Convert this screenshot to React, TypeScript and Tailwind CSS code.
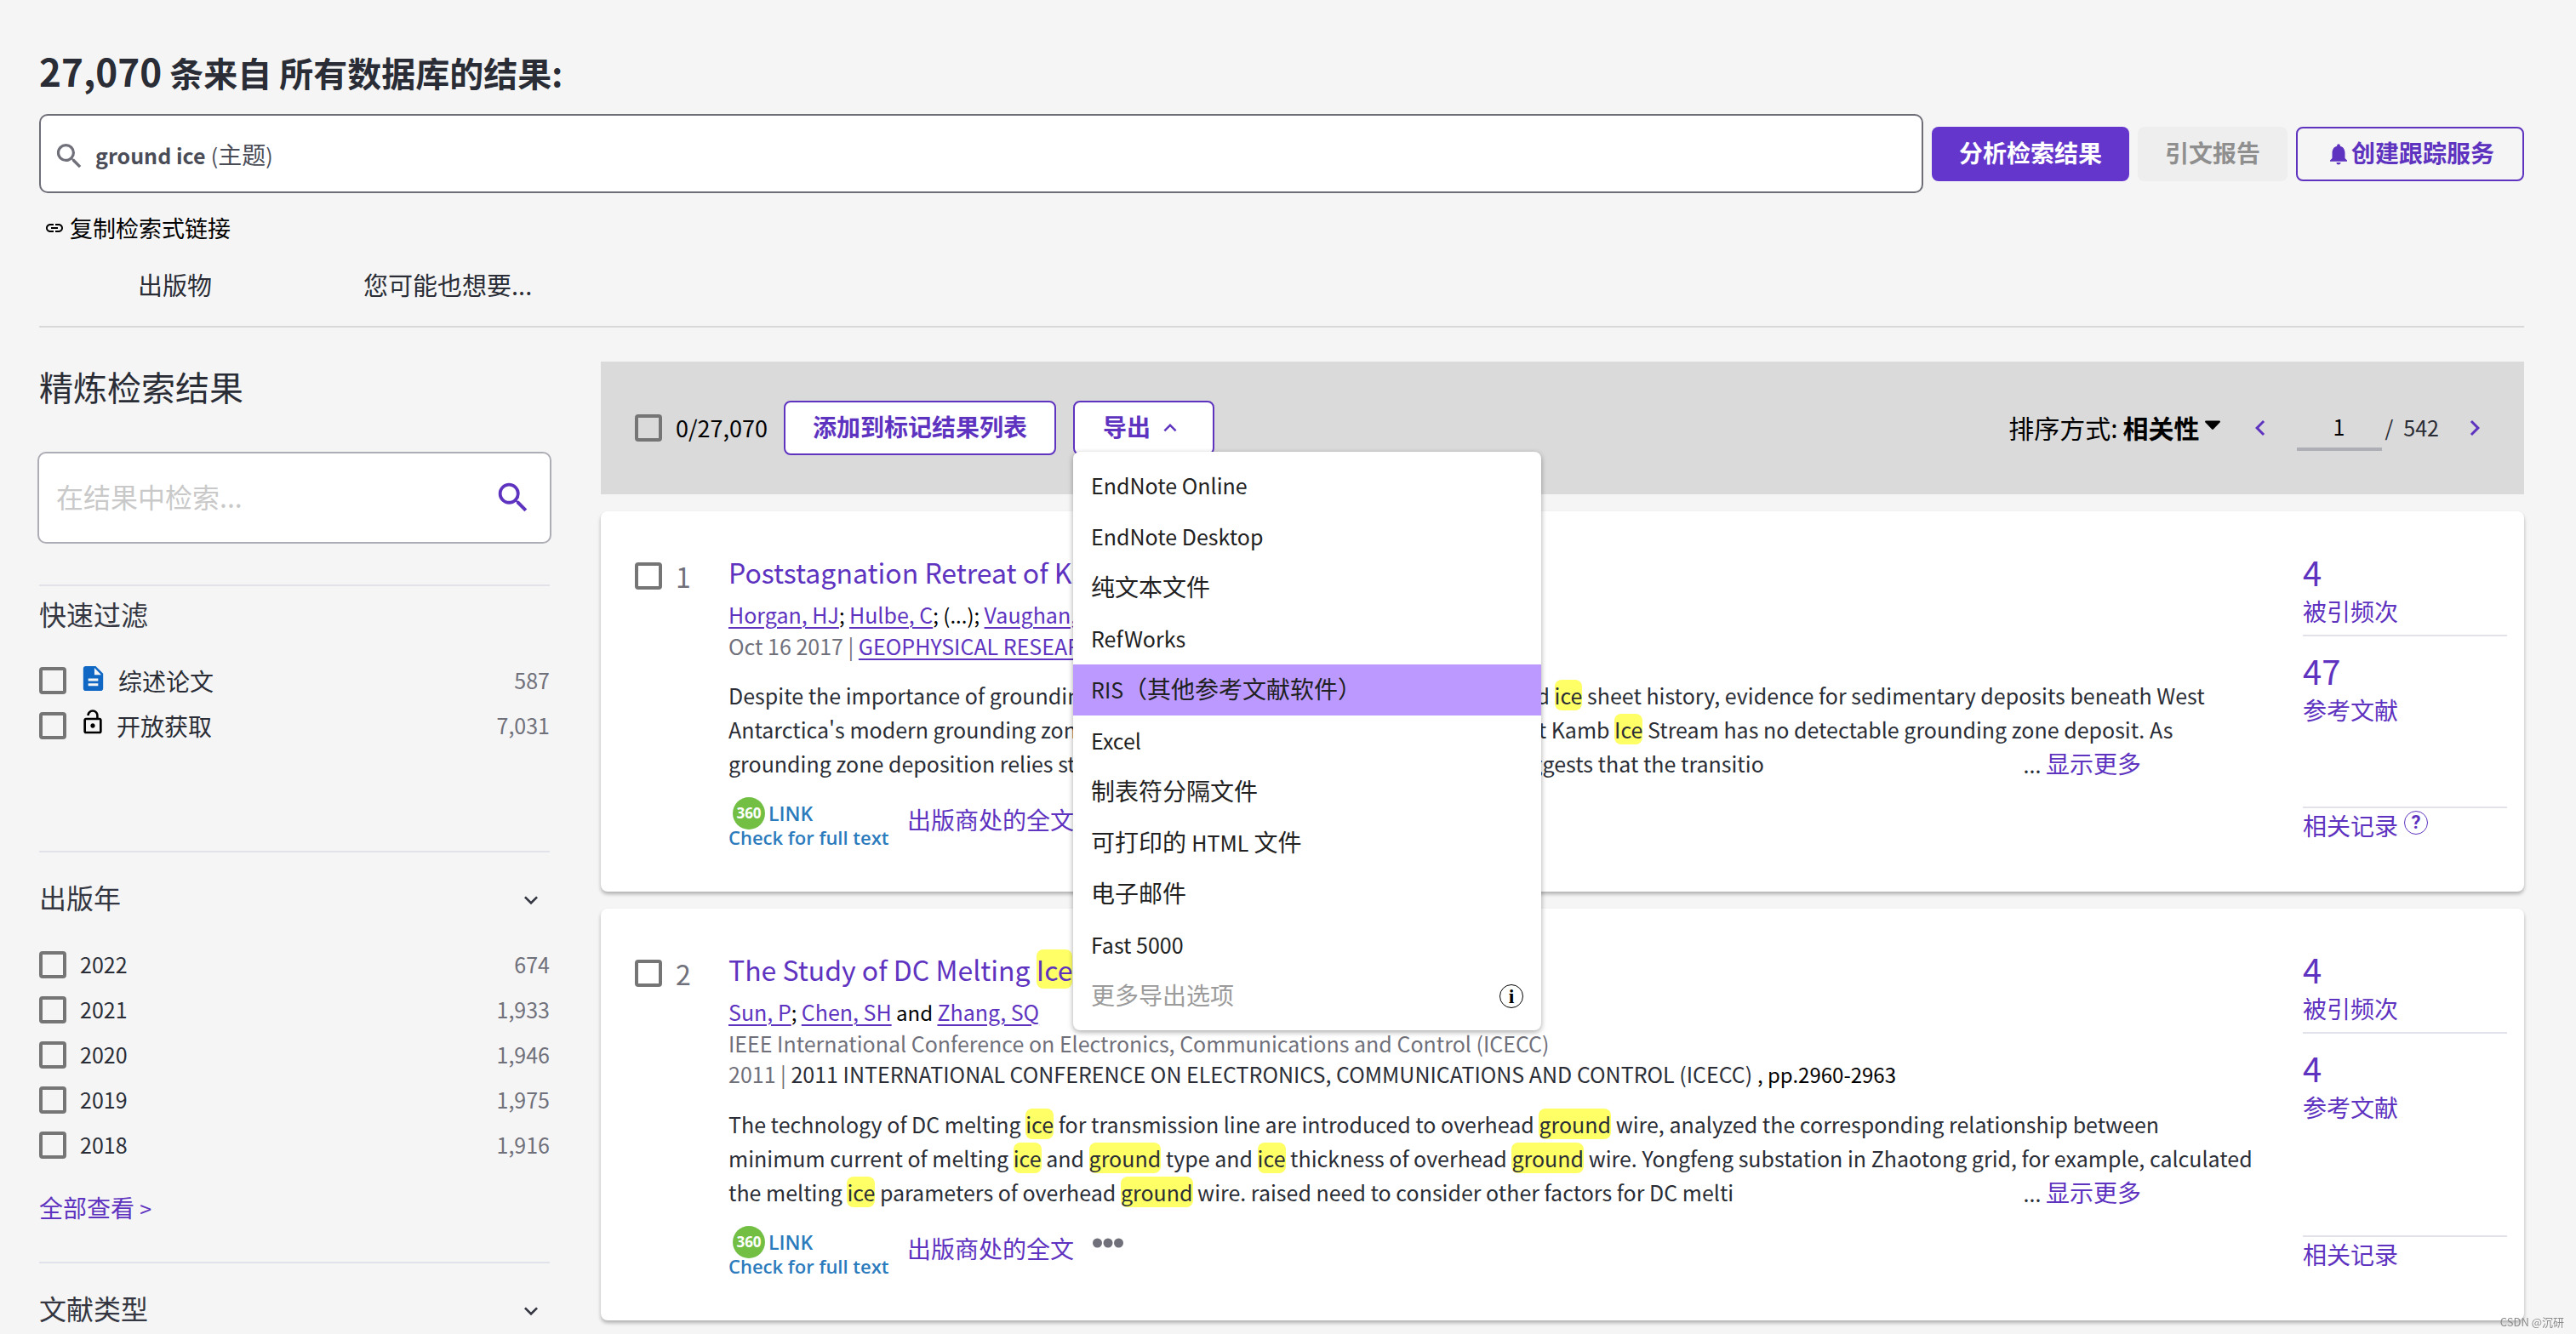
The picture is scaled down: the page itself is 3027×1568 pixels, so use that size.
import React, { useState } from 'react';
import {
  MdChevronLeft,
  MdChevronRight,
  MdDescription,
  MdExpandLess,
  MdExpandMore,
  MdLink,
  MdLockOpen,
  MdNotifications,
  MdSearch,
} from 'react-icons/md';

interface ExportOption {
  id: string;
  label: React.ReactNode;
}

interface RecordCardProps {
  index: number;
  title: React.ReactNode;
  meta: React.ReactNode;
  abstract: React.ReactNode[];
  cited: string;
  references: string;
  showMore?: boolean;
  showHelp?: boolean;
}

// Latin text is set slightly smaller than the Chinese around it
const En: React.FC<{ children: React.ReactNode }> = ({ children }) => (
  <span className="text-[25px]">{children}</span>
);

const Hit: React.FC<{ children: React.ReactNode }> = ({ children }) => (
  <mark className="rounded-lg bg-[#ffff66] text-inherit">{children}</mark>
);

const Author: React.FC<{ children: React.ReactNode }> = ({ children }) => (
  <a href="#" className="text-[25px] text-[#5e33bf] underline decoration-2 underline-offset-4">
    {children}
  </a>
);

const Checkbox: React.FC<{ id: string; label?: string }> = ({ id, label }) => (
  <input
    id={id}
    type="checkbox"
    aria-label={label}
    className="size-8 shrink-0 appearance-none rounded border-4 border-[#757575] checked:bg-[#5e33bf]"
  />
);

const exportOptions: ExportOption[] = [
  { id: 'online', label: <En>EndNote Online</En> },
  { id: 'desktop', label: <En>EndNote Desktop</En> },
  { id: 'plain', label: '纯文本文件' },
  { id: 'refworks', label: <En>RefWorks</En> },
  { id: 'ris', label: <><En>RIS</En>（其他参考文献软件）</> },
  { id: 'excel', label: <En>Excel</En> },
  { id: 'tab', label: '制表符分隔文件' },
  { id: 'html', label: <>可打印的 <En>HTML</En> 文件</> },
  { id: 'email', label: '电子邮件' },
  { id: 'fast', label: <En>Fast 5000</En> },
];

const years = [
  { year: '2022', count: '674' },
  { year: '2021', count: '1,933' },
  { year: '2020', count: '1,946' },
  { year: '2019', count: '1,975' },
  { year: '2018', count: '1,916' },
];

const FilterRow: React.FC<{
  id: string;
  icon?: React.ReactNode;
  label: string;
  count: string;
  latin?: boolean;
}> = ({ id, icon, label, count, latin }) => (
  <li className="flex h-[53px] items-center">
    <Checkbox id={id} />
    {icon}
    <label
      htmlFor={id}
      className={latin ? 'ml-4 text-[25px] text-[#2a2d35]' : 'ml-3 text-[28px] text-[#2a2d35]'}
    >
      {label}
    </label>
    <span className="ml-auto text-[25px] text-[#70707b]">{count}</span>
  </li>
);

const Sidebar: React.FC = () => (
  <aside className="w-[600px] shrink-0">
    <h2 className="text-[40px] leading-[58px] text-[#2a2d35]">精炼检索结果</h2>
    <div className="-mx-0.5 mt-12 flex h-[108px] items-center rounded-[10px] border-2 border-[#adadb5] bg-white px-5">
      <input
        type="text"
        aria-label="在结果中检索"
        placeholder="在结果中检索..."
        className="min-w-0 flex-1 bg-transparent pb-1 text-[32px] outline-none placeholder:text-[#c9c9c9]"
      />
      <button type="button" aria-label="检索">
        <MdSearch className="size-[46px] text-[#5e33bf]" />
      </button>
    </div>

    <section className="mt-12 border-t-2 border-[#e2e2ea] pt-2">
      <h3 className="text-[32px] leading-[48px] text-[#343741]">快速过滤</h3>
      <ul className="mt-7">
        <FilterRow
          id="review"
          icon={<MdDescription className="-mt-1 ml-3.5 size-[35px] text-[#1168c4]" />}
          label="综述论文"
          count="587"
        />
        <FilterRow
          id="open"
          icon={<MdLockOpen className="-mt-2 ml-[15px] size-8 text-black" />}
          label="开放获取"
          count="7,031"
        />
      </ul>
    </section>

    <section className="mt-[121px] border-t-2 border-[#e2e2ea] pt-7">
      <button type="button" className="flex w-full items-center justify-between pr-1.5">
        <span className="text-[32px] leading-[48px] text-[#343741]">出版年</span>
        <MdExpandMore className="mt-2 size-8 text-[#343741]" />
      </button>
      <ul className="mt-[29px]">
        {years.map(({ year, count }) => (
          <FilterRow key={year} id={`year-${year}`} label={year} count={count} latin />
        ))}
      </ul>
      <a href="#" className="mt-[27px] block text-[28px] leading-10 text-[#5e33bf]">
        全部查看 <En>&gt;</En>
      </a>
    </section>

    <section className="mt-[43px] border-t-2 border-[#e2e2ea] pt-7">
      <button type="button" className="flex w-full items-center justify-between pr-1.5">
        <span className="text-[32px] leading-[48px] text-[#343741]">文献类型</span>
        <MdExpandMore className="mt-2 size-8 text-[#343741]" />
      </button>
    </section>
  </aside>
);

const ExportMenu: React.FC<{ open: boolean }> = ({ open }) => {
  if (!open) return null;

  return (
    <ul className="absolute top-[60px] left-0 z-10 w-[550px] rounded-lg bg-white py-2.5 text-[28px] text-[#212121] shadow-[0_2px_6px_rgba(0,0,0,0.35)]">
      {exportOptions.map(({ id, label }) => (
        <li key={id}>
          <button
            type="button"
            className={
              id === 'ris'
                ? 'block h-[60px] w-full bg-[#bb99ff] px-[21px] pb-1 text-left leading-[56px]'
                : 'block h-[60px] w-full px-[21px] pb-1 text-left leading-[56px]'
            }
          >
            {label}
          </button>
        </li>
      ))}
      <li>
        <button
          type="button"
          disabled
          className="flex h-[60px] w-full items-center justify-between px-[21px] pb-1 text-left text-[#9b9b9b]"
        >
          更多导出选项
          <span className="mt-1 flex size-7 items-center justify-center rounded-full border border-black font-['Liberation_Serif',serif] text-[24px] leading-none font-bold text-black">
            i
          </span>
        </button>
      </li>
    </ul>
  );
};

const Toolbar: React.FC = () => {
  const [exportOpen, setExportOpen] = useState(true);

  return (
    <div className="flex h-[156px] items-center bg-[#dadada] px-10">
      <Checkbox id="select-all" />
      <label htmlFor="select-all" className="ml-4 text-[27px] text-black">
        0/27,070
      </label>
      <button
        type="button"
        className="ml-[19px] h-16 w-[320px] rounded-lg border-2 border-[#5e33bf] bg-white pb-1 text-[28px] font-bold text-[#5e33bf]"
      >
        添加到标记结果列表
      </button>
      <div className="relative ml-5">
        <button
          type="button"
          aria-expanded={exportOpen}
          onClick={() => setExportOpen(!exportOpen)}
          className="flex h-16 w-[166px] items-center rounded-lg border-2 border-[#5e33bf] bg-white pb-1 pl-[33px] text-[28px] font-bold text-[#5e33bf]"
        >
          导出
          <MdExpandLess className="mt-1 ml-2 size-[30px]" />
        </button>
        <ExportMenu open={exportOpen} />
      </div>

      <button type="button" className="ml-auto flex items-center pb-0.5 text-[30px] text-black">
        <span>排序方式:</span>
        <strong className="ml-1.5">相关性</strong>
        <svg viewBox="0 0 20 12" className="mb-1 ml-1.5 h-3 w-[18px]" fill="currentColor">
          <path d="M0 1.5Q0 0 1.5 0h17Q20 0 20 1.5L11 11q-1 1-2 0z" />
        </svg>
      </button>
      <button type="button" aria-label="上一页" className="ml-[29px]">
        <MdChevronLeft className="size-9 text-[#5e33bf]" />
      </button>
      <input
        type="text"
        aria-label="页码"
        defaultValue="1"
        className="mt-1 ml-[25px] h-[50px] w-[100px] border-b-4 border-[#aeaeb6] bg-transparent pb-1 text-center text-[25px] text-black outline-none"
      />
      <span className="ml-1 text-[25px] text-[#2a2d35]">/</span>
      <span className="ml-3 text-[25px] text-[#2a2d35]">542</span>
      <button type="button" aria-label="下一页" className="ml-6">
        <MdChevronRight className="size-9 text-[#5e33bf]" />
      </button>
    </div>
  );
};

const LinkLogo: React.FC = () => (
  <a
    href="#"
    className="flex h-14 w-[190px] flex-col font-['Open_Sans',sans-serif] font-semibold text-[#2b7bbd]"
  >
    <span className="flex h-[38px] items-center pl-[5px]">
      <span className="flex size-[38px] items-center justify-center rounded-full bg-[#72bf44] text-[17px] font-bold text-white">
        360
      </span>
      <span className="ml-1 text-[23px] leading-none">LINK</span>
    </span>
    <span className="text-[22px] leading-[18px] whitespace-nowrap">Check for full text</span>
  </a>
);

const RecordCard: React.FC<RecordCardProps> = ({
  index,
  title,
  meta,
  abstract,
  cited,
  references,
  showMore,
  showHelp,
}) => (
  <article className="mt-5 flex rounded-lg bg-white pr-5 pl-10 shadow-[0_3px_4px_rgba(0,0,0,0.28)]">
    <div className="mt-[60px] flex h-8 w-[110px] shrink-0 items-center gap-4">
      <Checkbox id={`record-${index}`} />
      <label htmlFor={`record-${index}`} className="text-[32px] text-[#70707b]">
        {index}
      </label>
    </div>

    <div className="min-w-0 flex-1 pt-[47px] pb-[55px] whitespace-nowrap">
      <h3 className="text-[32px] leading-[48px]">
        <a href="#" className="text-[#5e33bf]">
          {title}
        </a>
      </h3>
      <div className="mt-2 text-[25px] leading-9 text-[#70707b]">{meta}</div>
      <div className="mt-5 text-[25px] leading-10 text-[#2a2d35]">
        {abstract.slice(0, -1).map((line, i) => (
          <p key={i} className="h-10">{line}</p>
        ))}
        <div className="mr-[190px] flex h-10 justify-between">
          <p>{abstract[abstract.length - 1]}</p>
          <span>
            ...{' '}
            <a href="#" className="text-[28px] text-[#5e33bf]">
              显示更多
            </a>
          </span>
        </div>
      </div>
      <div className="mt-5 flex items-center">
        <LinkLogo />
        <a href="#" className="mb-1 ml-5 text-[28px] leading-10 text-[#5e33bf]">
          出版商处的全文
        </a>
        {showMore && (
          <button type="button" aria-label="更多" className="mb-4 ml-[22px]">
            <svg viewBox="0 0 36 12" className="h-3 w-9" fill="#70707b">
              <circle cx="5.5" cy="6" r="5.5" />
              <circle cx="18" cy="6" r="5.5" />
              <circle cx="30.5" cy="6" r="5.5" />
            </svg>
          </button>
        )}
      </div>
    </div>

    <div className="flex w-60 shrink-0 flex-col pt-[43px] pb-[58px] text-[#5e33bf]">
      <a href="#" className="block border-b-2 border-[#e2e2ea] pb-2.5">
        <span className="block text-[40px] leading-[56px]">{cited}</span>
        <span className="block text-[28px] leading-9">被引频次</span>
      </a>
      <a href="#" className="mt-3 block">
        <span className="block text-[40px] leading-[56px]">{references}</span>
        <span className="block text-[28px] leading-9">参考文献</span>
      </a>
      <div className="mt-auto flex items-center border-t-2 border-[#e2e2ea] text-[28px] leading-10">
        <a href="#">相关记录</a>
        {showHelp && (
          <button
            type="button"
            aria-label="帮助"
            className="mb-1.5 ml-[7px] flex size-7 items-center justify-center rounded-full border border-[#5e33bf] font-[Roboto,sans-serif] text-[22px] leading-none font-bold"
          >
            ?
          </button>
        )}
      </div>
    </div>
  </article>
);

const SearchHeader: React.FC = () => (
  <header className="border-b-2 border-[#d8d8d8] pt-[55px] pb-[27px]">
    <h1 className="text-[40px] leading-[60px] font-bold text-[#2a2d35]">
      <span className="text-[44px] leading-none">27,070</span> 条来自 所有数据库的结果:
    </h1>
    <div className="mt-[19px] flex items-center gap-2.5">
      <div className="flex h-[93px] flex-1 items-center rounded-[10px] border-2 border-[#6e6e78] bg-white pl-3.5 text-[28px] text-[#4a4d57]">
        <MdSearch className="mt-1.5 size-[39px] text-[#70707b]" />
        <p className="ml-[11px]">
          <strong className="text-[25px]">ground ice</strong> <En>(</En>主题<En>)</En>
        </p>
      </div>
      <button
        type="button"
        className="h-16 w-[232px] rounded-lg bg-[#6536cc] pb-1 text-[28px] font-bold text-white"
      >
        分析检索结果
      </button>
      <button
        type="button"
        disabled
        className="h-16 w-[176px] rounded-lg bg-[#eeeeee] pb-1 text-[28px] font-bold text-[#8f8f8f]"
      >
        引文报告
      </button>
      <button
        type="button"
        className="flex h-16 w-[268px] items-center justify-center rounded-lg border-2 border-[#5e33bf] pb-1 text-[28px] font-bold text-[#5e33bf]"
      >
        <MdNotifications className="mt-1 size-[30px]" />
        创建跟踪服务
      </button>
    </div>
    <button type="button" className="mt-[21px] ml-1.5 flex h-10 items-center text-[27px] text-black">
      <MdLink className="size-6" />
      <span className="ml-1.5">复制检索式链接</span>
    </button>
    <nav className="mt-[26px] mb-0.5 flex gap-[178px] pl-[116px] text-[29px] leading-10 text-[#2a2d35]">
      <a href="#">出版物</a>
      <a href="#">您可能也想要...</a>
    </nav>
  </header>
);

const App: React.FC = () => (
  <div
    lang="zh-CN"
    className="min-h-screen bg-[#f5f5f5] pr-[61px] pl-[46px] font-['Noto_Sans_CJK_SC',sans-serif]"
  >
    <SearchHeader />
    <div className="flex gap-[60px] pt-10">
      <Sidebar />
      <main className="min-w-0 flex-1">
        <Toolbar />
        <RecordCard
          index={1}
          title={<>Poststagnation Retreat of Kamb <Hit>Ice</Hit> Stream's Grounding Zone</>}
          meta={
            <>
              <p className="text-[24px] text-black">
                <Author>Horgan, HJ</Author>; <Author>Hulbe, C</Author>; (...);{' '}
                <Author>Vaughan, MJ</Author>
              </p>
              <p>
                Oct 16 2017 | <Author>GEOPHYSICAL RESEARCH LETTERS</Author>
              </p>
            </>
          }
          abstract={[
            <>Despite the importance of grounding zones for understanding glacial dynamics and <Hit>ice</Hit> sheet history, evidence for sedimentary deposits beneath West</>,
            <>Antarctica's modern grounding zones is poor. Seismic surveying reveals that recent Kamb <Hit>Ice</Hit> Stream has no detectable grounding zone deposit. As</>,
            <>grounding zone deposition relies strongly on past stability, this absence locally suggests that the transitio</>,
          ]}
          cited="4"
          references="47"
          showHelp
        />
        <RecordCard
          index={2}
          title={<>The Study of DC Melting <Hit>Ice</Hit> for Overhead <Hit>Ground</Hit> Wire</>}
          meta={
            <>
              <p className="text-[24px] text-black">
                <Author>Sun, P</Author>; <Author>Chen, SH</Author> and <Author>Zhang, SQ</Author>
              </p>
              <p>IEEE International Conference on Electronics, Communications and Control (ICECC)</p>
              <p>
                2011 |{' '}
                <span className="text-[#2a2d35]">
                  2011 INTERNATIONAL CONFERENCE ON ELECTRONICS, COMMUNICATIONS AND CONTROL (ICECC)
                </span>{' '}
                <span className="text-[24px] text-black">, pp.2960-2963</span>
              </p>
            </>
          }
          abstract={[
            <>The technology of DC melting <Hit>ice</Hit> for transmission line are introduced to overhead <Hit>ground</Hit> wire, analyzed the corresponding relationship between</>,
            <>minimum current of melting <Hit>ice</Hit> and <Hit>ground</Hit> type and <Hit>ice</Hit> thickness of overhead <Hit>ground</Hit> wire. Yongfeng substation in Zhaotong grid, for example, calculated</>,
            <>the melting <Hit>ice</Hit> parameters of overhead <Hit>ground</Hit> wire. raised need to consider other factors for DC melti</>,
          ]}
          cited="4"
          references="4"
          showMore
        />
      </main>
    </div>
    <small className="fixed right-3.5 bottom-1 text-[13px] leading-5 text-[#8c8c8c]">
      CSDN @沉研
    </small>
  </div>
);

export default App;
